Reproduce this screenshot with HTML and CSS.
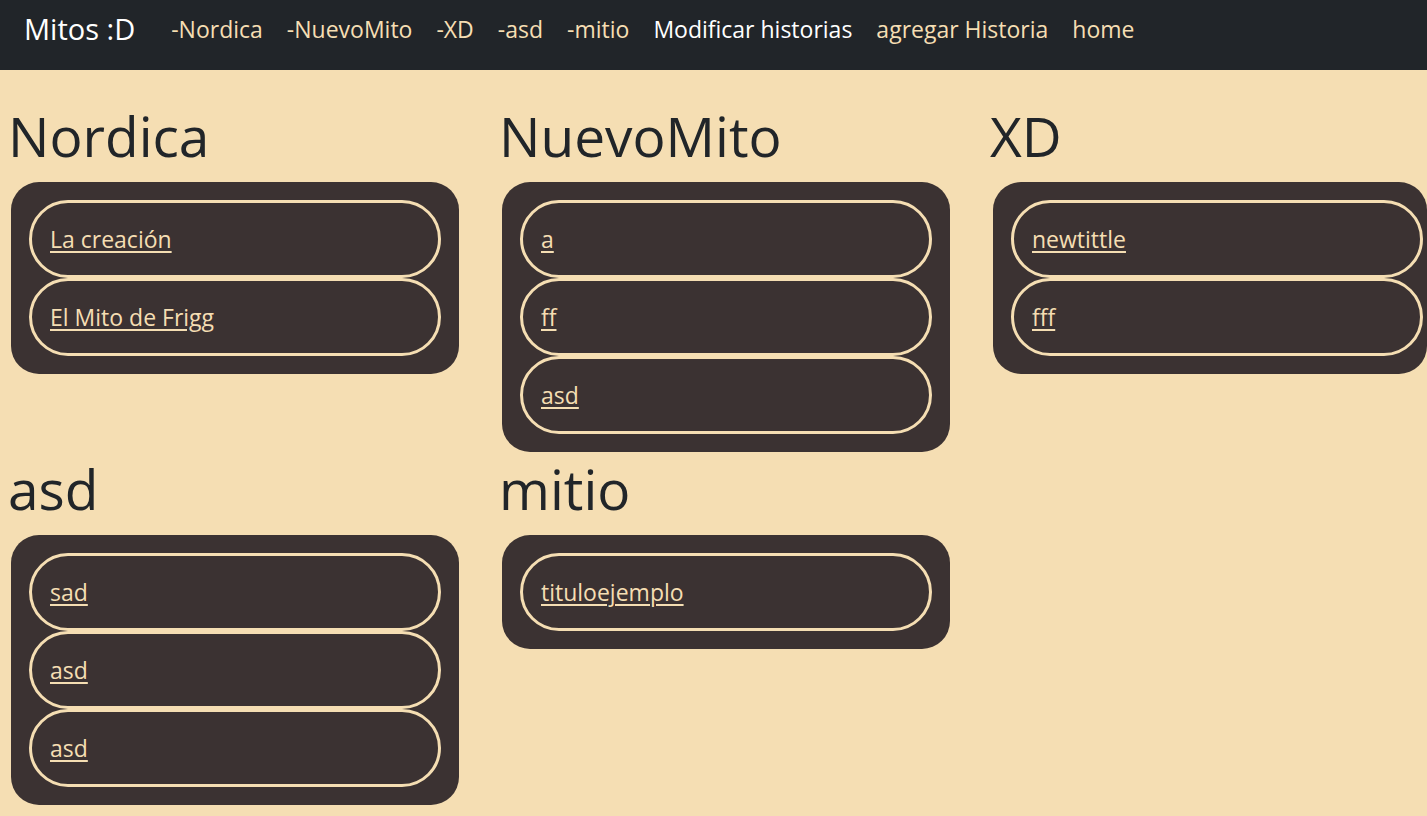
FILE: index.html
```html
<!DOCTYPE html>
<html lang="es">
<head>
<meta charset="utf-8">
<title>Mitos :D</title>
<link rel="stylesheet" href="styles.css">
</head>
<body>
<nav class="navbar">
  <a class="brand" href="#">Mitos :D</a>
  <a class="nav-link" href="#">-Nordica</a>
  <a class="nav-link" href="#">-NuevoMito</a>
  <a class="nav-link" href="#">-XD</a>
  <a class="nav-link" href="#">-asd</a>
  <a class="nav-link" href="#">-mitio</a>
  <a class="nav-link active" href="#">Modificar historias</a>
  <a class="nav-link" href="#">agregar Historia</a>
  <a class="nav-link" href="#">home</a>
</nav>
<main class="grid">
  <section class="myth">
    <h1 class="title">Nordica</h1>
    <div class="card">
      <div class="item"><a href="#">La creación</a></div>
      <div class="item"><a href="#">El Mito de Frigg</a></div>
    </div>
  </section>
  <section class="myth">
    <h1 class="title">NuevoMito</h1>
    <div class="card">
      <div class="item"><a href="#">a</a></div>
      <div class="item"><a href="#">ff</a></div>
      <div class="item"><a href="#">asd</a></div>
    </div>
  </section>
  <section class="myth">
    <h1 class="title">XD</h1>
    <div class="card">
      <div class="item"><a href="#">newtittle</a></div>
      <div class="item"><a href="#">fff</a></div>
    </div>
  </section>
  <section class="myth">
    <h1 class="title">asd</h1>
    <div class="card">
      <div class="item"><a href="#">sad</a></div>
      <div class="item"><a href="#">asd</a></div>
      <div class="item"><a href="#">asd</a></div>
    </div>
  </section>
  <section class="myth">
    <h1 class="title">mitio</h1>
    <div class="card">
      <div class="item"><a href="#">tituloejemplo</a></div>
    </div>
  </section>
</main>
</body>
</html>
```
FILE: styles.css
```css
* { box-sizing: border-box; }
html, body { margin: 0; padding: 0; }
body {
  background: #f5deb3;
  font-family: "Open Sans", "Noto Sans", sans-serif;
  color: #212529;
  overflow: hidden;
}
.navbar {
  height: 70px;
  background: #212529;
  display: flex;
  align-items: flex-start;
  padding: 11px 0 23px 24px;
}
.brand {
  color: #ffffff;
  text-decoration: none;
  font-size: 29px;
  line-height: 36px;
  margin-right: 24px;
}
.nav-link {
  color: #f5deb3;
  text-decoration: none;
  font-size: 23px;
  line-height: 36px;
  padding: 0 12px;
}
.nav-link.active { color: #ffffff; }
.grid {
  display: grid;
  grid-template-columns: 491px 491px 1fr;
  padding: 29px 0 0 8px;
}
.myth {
  padding-top: 4px;
  min-width: 0;
}
.title {
  font-size: 55px;
  font-weight: 500;
  line-height: 66px;
  margin: 0 0 13px 0;
}
.card {
  background: #3b3232;
  border-radius: 28px;
  margin-left: 3px;
  width: 448px;
  max-width: calc(100% - 3px);
  padding: 18px;
}
.item {
  width: 412px;
  border: 3px solid #f5deb3;
  border-radius: 40px;
  padding: 18px 18px;
  font-size: 23px;
  line-height: 36px;
}
.item a {
  color: #f5deb3;
  text-decoration: underline;
  text-decoration-thickness: 2px;
  text-underline-offset: 3px;
}
```
